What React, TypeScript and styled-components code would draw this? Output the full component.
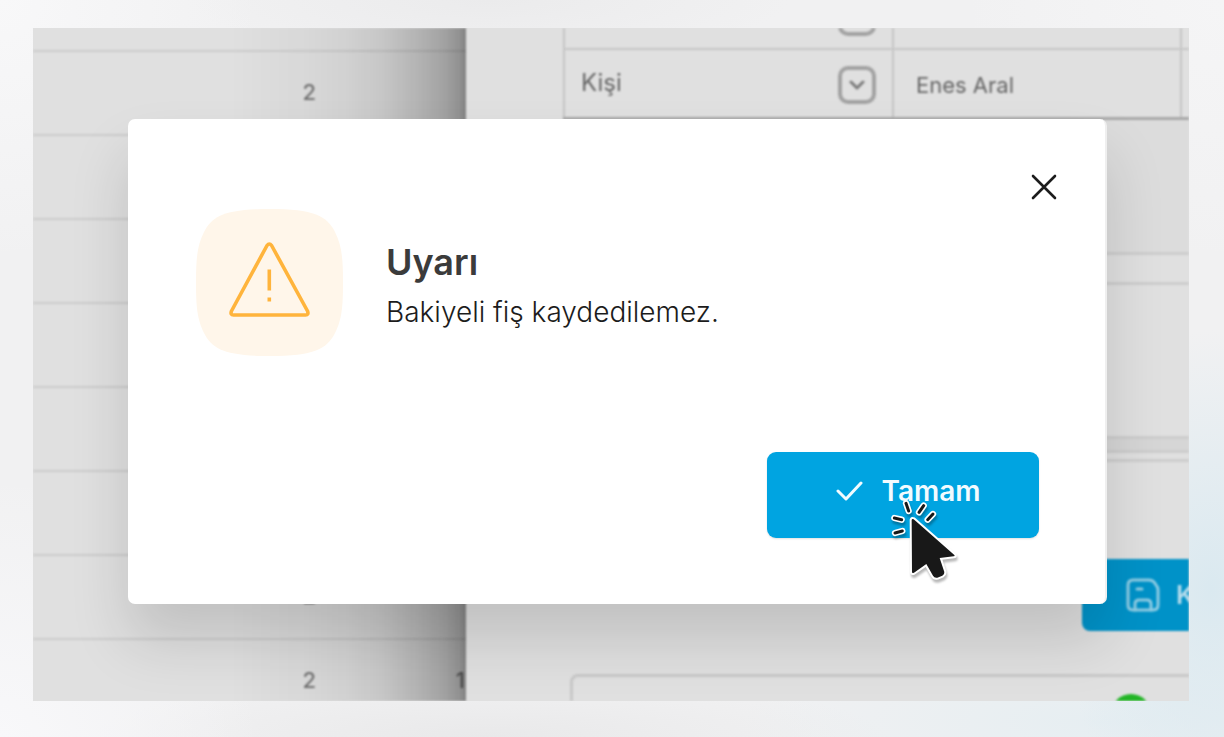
import React from "react";
import styled, { createGlobalStyle } from "styled-components";

const GlobalStyle = createGlobalStyle`
  *, *::before, *::after { box-sizing: border-box; }
  body {
    margin: 0;
    font-family: Inter, "Liberation Sans", sans-serif;
    color: #3a3a3a;
  }
  button { font: inherit; border: 0; padding: 0; }
  svg { flex: none; }
`;

const Page = styled.div`
  display: flex;
  min-height: 100vh;
  padding: 28px 35px 36px 33px;
  background:
    radial-gradient(ellipse 150px 260px at 99% 80%, #dae9f0 0%, rgba(218, 233, 240, 0) 100%),
    radial-gradient(ellipse 360px 90px at 90% 98%, #e6eef2 0%, rgba(230, 238, 242, 0) 100%),
    radial-gradient(circle 260px at 0 0, #f8f8f9 0%, rgba(248, 248, 249, 0) 100%),
    radial-gradient(circle 260px at 0 100%, #f8f8fa 0%, rgba(248, 248, 250, 0) 100%),
    radial-gradient(circle 260px at 100% 0, #f5f5f6 0%, rgba(245, 245, 246, 0) 100%),
    radial-gradient(ellipse 300px 60px at 40% 0, #ebebec 0%, rgba(235, 235, 236, 0) 100%),
    radial-gradient(ellipse 400px 60px at 40% 100%, #e9e9ea 0%, rgba(233, 233, 234, 0) 100%),
    #f1f1f2;
`;

const Frame = styled.main`
  position: relative;
  flex: 1;
  display: flex;
  overflow: hidden;
  background: #e0e0e0;
`;

const Backdrop = styled.div`
  flex: 1;
  min-width: 0;
  height: 673px;
  display: flex;
  overflow: hidden;
  filter: blur(1px);
`;

const ListPane = styled.section`
  position: relative;
  flex: 0 0 433px;
  overflow: hidden;

  &::after {
    content: "";
    position: absolute;
    inset: 0 0 0 auto;
    width: 236px;
    background: linear-gradient(
      90deg,
      rgba(0, 0, 0, 0) 0%,
      rgba(0, 0, 0, 0.03) 30%,
      rgba(0, 0, 0, 0.06) 47%,
      rgba(0, 0, 0, 0.11) 64%,
      rgba(0, 0, 0, 0.2) 80%,
      rgba(0, 0, 0, 0.28) 91%,
      rgba(0, 0, 0, 0.35) 97%,
      rgba(0, 0, 0, 0.42) 100%
    );
  }
`;

const ListTable = styled.table`
  width: 520px;
  margin-top: -61px;
  table-layout: fixed;
  border-collapse: collapse;
`;

const ListCell = styled.td<{ $width: number }>`
  width: ${(p) => p.$width}px;
  height: 84px;
  padding: 0 0 2px;
  border-bottom: 2px solid #cccccc;
  text-align: right;
  font-size: 22px;
  font-weight: 500;
  line-height: 28px;
  color: #747474;
`;

const FormPane = styled.section`
  flex: 1;
  min-width: 0;
  overflow: hidden;
  display: flex;
  flex-direction: column;
  align-items: flex-start;
`;

const FormTable = styled.table`
  flex: none;
  width: 760px;
  margin: -49px 0 0 97px;
  table-layout: fixed;
  border-collapse: collapse;
  border-bottom: 3px solid #a8a8a8;
`;

const FormCell = styled.td<{ $width?: number }>`
  width: ${(p) => (p.$width ? `${p.$width}px` : "auto")};
  height: 69px;
  padding: 4px 16px 0 22px;
  border: 2px solid #c6c6c6;
  font-size: 22px;
  line-height: 28px;
  color: #666666;
`;

const FormLabelCell = styled(FormCell)`
  padding: 4px 16px 0;
  font-size: 24px;
  line-height: 34px;
`;

const LabelRow = styled.div`
  display: flex;
  align-items: flex-start;
  justify-content: space-between;
`;

const DropButton = styled.button`
  display: flex;
  align-items: center;
  justify-content: center;
  width: 38px;
  height: 38px;
  margin-left: auto;
  border: 4px solid #a2a2a2;
  border-radius: 10px;
  background: transparent;
  color: #7c7c7c;
`;

const Band = styled.div<{ $height: number; $tone: string }>`
  flex: none;
  width: 100%;
  height: ${(p) => p.$height}px;
  border-bottom: 3px solid #cdcdcd;
  background: ${(p) => p.$tone};
`;

const SaveButton = styled.button`
  flex: none;
  display: flex;
  align-items: center;
  gap: 16px;
  width: 220px;
  height: 72px;
  margin: 97px 0 0 616px;
  padding: 0 44px;
  border-radius: 8px;
  background: #0092c8;
  color: #b5dcec;
  font-size: 26px;
  font-weight: 600;
`;

const Summary = styled.div`
  flex: none;
  width: 760px;
  height: 90px;
  margin: 43px 0 0 104px;
  padding: 17px 0 0 538px;
  border: 3px solid #c8c8c8;
  border-radius: 8px;
`;

const StatusDot = styled.span`
  display: block;
  width: 40px;
  height: 40px;
  border-radius: 50%;
  background: #22b526;
`;

const Overlay = styled.div`
  position: absolute;
  inset: 0;
  padding: 91px 82px 0 95px;
`;

const Dialog = styled.section`
  display: flex;
  flex-direction: column;
  min-height: 485px;
  border-radius: 7px;
  border-right: 2px solid #efefef;
  background: #ffffff;
  box-shadow: 0 36px 60px rgba(0, 0, 0, 0.14);
`;

const DialogHeader = styled.header`
  display: flex;
  justify-content: flex-end;
  padding: 48px 41px 0;
`;

const CloseButton = styled.button`
  display: flex;
  align-items: center;
  justify-content: center;
  width: 40px;
  height: 40px;
  background: transparent;
  color: #1c1c1c;
`;

const DialogBody = styled.div`
  display: flex;
  align-items: center;
  gap: 43px;
  padding: 2px 68px 0;
`;

const Message = styled.div`
  padding-top: 8px;
`;

const Title = styled.h1`
  margin: 0;
  font-size: 36px;
  font-weight: 600;
  line-height: 50px;
  color: #3b3b3b;
`;

const Text = styled.p`
  margin: 0;
  font-size: 28px;
  font-weight: 300;
  line-height: 50px;
  color: #1c1c1c;
`;

const DialogFooter = styled.footer`
  display: flex;
  justify-content: flex-end;
  margin-top: auto;
  padding: 0 66px 66px;
`;

const ConfirmButton = styled.button`
  position: relative;
  display: flex;
  align-items: center;
  justify-content: center;
  gap: 18px;
  width: 272px;
  height: 86px;
  padding: 0 0 8px 10px;
  border-radius: 9px;
  background: #00a4e1;
  box-shadow: 0 1px 2px rgba(0, 0, 0, 0.12);
  color: #f2fbff;
  font-size: 28px;
  font-weight: 600;
`;

const Pointer = styled.svg`
  position: absolute;
  left: 123px;
  top: 46px;
  filter: drop-shadow(1px 3px 1px rgba(0, 0, 0, 0.28));
`;

const listRows = [
  ["", ""],
  ["2", ""],
  ["2", ""],
  ["2", ""],
  ["2", ""],
  ["2", ""],
  ["2", ""],
  ["2", ""],
  ["2", "1"],
];

const rays = "M468 221L476 244M521 228L507 248M549 253L533 270M433 265L455 270M435 310L457 304";
const arrow = "M485 271Q486 266 491 269L613 376Q616 380 611 380L569 385L583 427Q584 434 577 438L562 444Q553 446 549 438L529 403L492 429Q486 432 486 427Z";

function ChevronIcon() {
  return (
    <svg width="16" height="10" viewBox="0 0 16 10" fill="none" stroke="currentColor" strokeWidth="3" strokeLinecap="round" strokeLinejoin="round">
      <path d="M2 2L8 8L14 2" />
    </svg>
  );
}

function SaveIcon() {
  return (
    <svg width="34" height="34" viewBox="0 0 34 34" fill="none" stroke="currentColor" strokeWidth="3" strokeLinecap="round" strokeLinejoin="round" opacity="0.8">
      <path d="M7 2H23Q26 2 28 4L30 7Q32 9 32 12V27Q32 32 27 32H7Q2 32 2 27V7Q2 2 7 2Z" />
      <path d="M9 32V26Q9 22 13 22H21Q25 22 25 26V32M11 11H16" />
    </svg>
  );
}

function WarningBadge() {
  return (
    <svg width="147" height="147" viewBox="0 0 147 147" fill="none" aria-hidden="true">
      <path fill="#fff6ea" d="M73.500 0C118 0 131 7 139 23C146 37 147 50 147 73.500C147 97 146 110 139 124C131 140 118 147 73.500 147C29 147 16 140 8 124C1 110 0 97 0 73.500C0 50 1 37 8 23C16 7 29 0 73.500 0Z" />
      <g stroke="#ffb43c" strokeWidth="3.600" strokeLinecap="round" strokeLinejoin="round">
        <path d="M71 36.500Q73.300 33.500 75.600 36.500L111.500 102Q113 106 109.500 106H37.500Q34 106 35.500 102Z" />
        <path strokeLinecap="butt" d="M73.300 60.500V81.500M73.300 88.500V92.500" />
      </g>
    </svg>
  );
}

export default function App() {
  return (
    <>
      <GlobalStyle />
      <Page>
        <Frame>
          <Backdrop>
            <ListPane>
              <ListTable>
                <tbody>
                  {listRows.map(([count, next], i) => (
                    <tr key={i}>
                      <ListCell $width={283}>{count}</ListCell>
                      <ListCell $width={149}>{next}</ListCell>
                      <ListCell $width={88} />
                    </tr>
                  ))}
                </tbody>
              </ListTable>
            </ListPane>
            <FormPane>
              <FormTable>
                <tbody>
                  <tr>
                    <FormLabelCell $width={329}>
                      <LabelRow>
                        <DropButton aria-label="Seç"><ChevronIcon /></DropButton>
                      </LabelRow>
                    </FormLabelCell>
                    <FormCell $width={288} />
                    <FormCell />
                  </tr>
                  <tr>
                    <FormLabelCell $width={329}>
                      <LabelRow>
                        <span>Kişi</span>
                        <DropButton aria-label="Kişi seç"><ChevronIcon /></DropButton>
                      </LabelRow>
                    </FormLabelCell>
                    <FormCell $width={288}>Enes Aral</FormCell>
                    <FormCell />
                  </tr>
                </tbody>
              </FormTable>
              <Band $height={135} $tone="#dcdcdc" />
              <Band $height={30} $tone="#e0e0e0" />
              <Band $height={154} $tone="#e0e0e0" />
              <Band $height={14} $tone="#d6d6d6" />
              <Band $height={9} $tone="#e0e0e0" />
              <SaveButton>
                <SaveIcon />
                Kaydet
              </SaveButton>
              <Summary>
                <StatusDot />
              </Summary>
            </FormPane>
          </Backdrop>
          <Overlay>
            <Dialog role="dialog" aria-labelledby="dialog-title" aria-describedby="dialog-text">
              <DialogHeader>
                <CloseButton aria-label="Kapat">
                  <svg width="26" height="26" viewBox="0 0 26 26" fill="none" stroke="currentColor" strokeWidth="2.6" strokeLinecap="round">
                    <path d="M2 2L24 24M24 2L2 24" />
                  </svg>
                </CloseButton>
              </DialogHeader>
              <DialogBody>
                <WarningBadge />
                <Message>
                  <Title id="dialog-title">Uyarı</Title>
                  <Text id="dialog-text">Bakiyeli fiş kaydedilemez.</Text>
                </Message>
              </DialogBody>
              <DialogFooter>
                <ConfirmButton>
                  <svg width="28" height="20" viewBox="0 0 28 20" fill="none" stroke="currentColor" strokeWidth="3" strokeLinecap="round" strokeLinejoin="round">
                    <path d="M3 10L11 18L26 2" />
                  </svg>
                  Tamam
                  <Pointer width="70" height="85" viewBox="420 205 210 255" fill="none" aria-hidden="true">
                    <path d={rays} stroke="#ffffff" strokeWidth="19" strokeLinecap="round" />
                    <path d={arrow} fill="#ffffff" stroke="#ffffff" strokeWidth="12" strokeLinejoin="round" />
                    <path d={rays} stroke="#181818" strokeWidth="9" strokeLinecap="round" />
                    <path d={arrow} fill="#181818" />
                  </Pointer>
                </ConfirmButton>
              </DialogFooter>
            </Dialog>
          </Overlay>
        </Frame>
      </Page>
    </>
  );
}
